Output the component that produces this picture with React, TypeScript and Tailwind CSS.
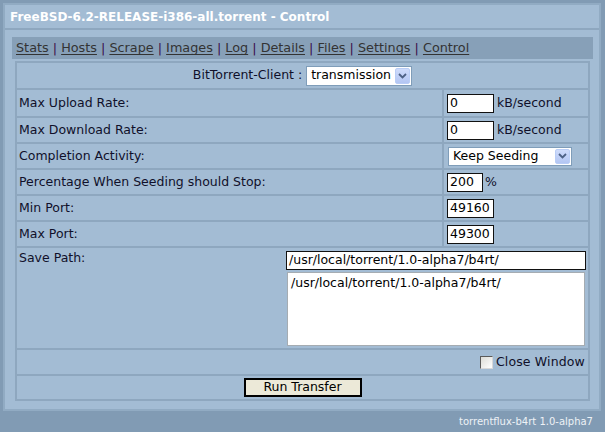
import React from "react";

const Chevron = () => (
  <svg width="9" height="6" viewBox="0 0 9 6">
    <path d="M1 1 L4.5 4.5 L8 1" fill="none" stroke="#4d6185" strokeWidth="1.8" />
  </svg>
);

function FakeSelect({ value, w, h }: { value: string; w: number; h: number }) {
  return (
    <div
      className="flex items-center bg-white border border-[#7f9db9] box-border"
      style={{ width: w, height: h }}
    >
      <span className="flex-1 pl-[4px] leading-none text-[#000]">{value}</span>
      <div className="mr-[1px] h-[calc(100%-2px)] w-[15px] rounded-[2px] bg-gradient-to-b from-[#cfdcfb] to-[#b3c6f3] border border-[#b9cdf6] flex items-center justify-center">
        <Chevron />
      </div>
    </div>
  );
}

function TextBox({ value, w }: { value: string; w: number }) {
  return (
    <div
      className="h-[19px] bg-white border border-[#111] box-border flex items-center pl-[2px] text-[#000] leading-none"
      style={{ width: w }}
    >
      {value}
    </div>
  );
}

function Row({ label, h, children }: { label: string; h: number; children: React.ReactNode }) {
  return (
    <div className="flex border-b-2 border-[#8ea7bf]" style={{ height: h + 2 }}>
      <div className="w-[427px] flex items-center pl-[2px] border-r-2 border-[#8ea7bf]">{label}</div>
      <div className="flex-1 flex items-center pl-[3px] gap-[3px]">{children}</div>
    </div>
  );
}

export default function App() {
  const links = ["Stats", "Hosts", "Scrape", "Images", "Log", "Details", "Files", "Settings", "Control"];
  return (
    <div className="w-[605px] h-[432px] bg-[#819bb4] font-['DejaVu_Sans',sans-serif] text-[12.5px] text-[#10102a] overflow-hidden pt-[3px]">
      <div className="ml-[3px] w-[598px] h-[408px] border-2 border-[#91abc3] bg-[#a3bcd4] box-border">
        <div className="h-[25px] border-b-2 border-[#8ea7bf] flex items-center pl-[5px] text-white font-bold text-[12px]">
          FreeBSD-6.2-RELEASE-i386-all.torrent - Control
        </div>
        <div className="pl-[7px] pt-[7px]">
          <div className="w-[581px] h-[22px] bg-[#87a0b8] flex items-center pl-[4px] text-[12.8px]">
            {links.map((l, i) => (
              <React.Fragment key={l}>
                {i > 0 && <span className="text-[#3b0d4a] whitespace-pre"> | </span>}
                <span className="underline text-[#333] underline-offset-2">{l}</span>
              </React.Fragment>
            ))}
          </div>
          <div className="ml-[3px] mt-[2px] w-[575px] border-2 border-[#8ea7bf] box-border">
            <div className="h-[27px] border-b-2 border-[#8ea7bf] flex items-center justify-center">
              <span className="whitespace-pre">BitTorrent-Client : </span>
              <FakeSelect value="transmission" w={106} h={20} />
            </div>
            <Row label="Max Upload Rate:" h={26}>
              <TextBox value="0" w={47} />
              <span>kB/second</span>
            </Row>
            <Row label="Max Download Rate:" h={24}>
              <TextBox value="0" w={47} />
              <span>kB/second</span>
            </Row>
            <Row label="Completion Activity:" h={24}>
              <div className="pl-[1px]">
                <FakeSelect value="Keep Seeding" w={124} h={19} />
              </div>
            </Row>
            <Row label="Percentage When Seeding should Stop:" h={24}>
              <TextBox value="200" w={36} />
              <span className="-ml-[1px]">%</span>
            </Row>
            <Row label="Min Port:" h={24}>
              <TextBox value="49160" w={47} />
            </Row>
            <Row label="Max Port:" h={24}>
              <TextBox value="49300" w={47} />
            </Row>
            <div className="h-[102px] border-b-2 border-[#8ea7bf] flex justify-between pr-[2px]">
              <div className="pl-[2px] pt-[1px]">Save Path:</div>
              <div className="pt-[3px] flex flex-col items-end">
                <TextBox value="/usr/local/torrent/1.0-alpha7/b4rt/" w={300} />
                <div className="mt-[2px] mr-[1px] w-[298px] h-[74px] bg-white border border-[#a5acb2] box-border pl-[3px] pt-[1px] text-[#000]">
                  /usr/local/torrent/1.0-alpha7/b4rt/
                </div>
              </div>
            </div>
            <div className="h-[26px] border-b-2 border-[#8ea7bf] flex items-center justify-end pr-[3px] gap-[3px]">
              <div className="w-[13px] h-[13px] border border-[#5a5a5a] border-r-[#d8d8d8] border-b-[#d8d8d8] bg-gradient-to-br from-[#dcdcd7] to-white box-border" />
              <span className="tracking-[0.15px]">Close Window</span>
            </div>
            <div className="h-[23px] flex items-center justify-center">
              <div className="w-[118px] h-[19px] bg-[#ece9d8] border-2 border-[#000] box-border flex items-center justify-center text-[#000]">
                Run Transfer
              </div>
            </div>
          </div>
        </div>
      </div>
      <div className="h-[21px] flex items-center justify-end pr-[12px] text-[10px] text-[#eef2f6]">
        torrentflux-b4rt 1.0-alpha7
      </div>
    </div>
  );
}
